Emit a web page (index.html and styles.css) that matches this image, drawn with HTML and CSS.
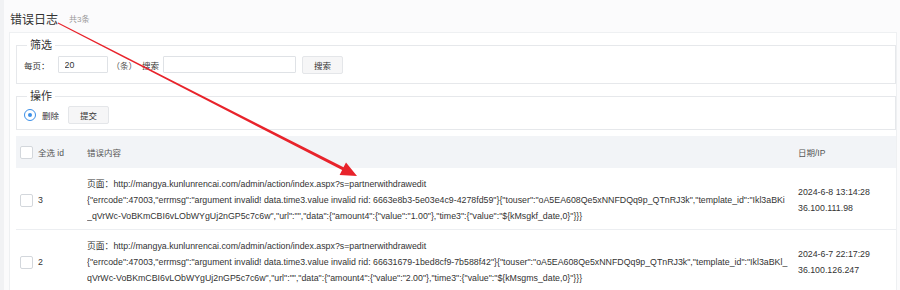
FILE: index.html
```html
<!DOCTYPE html>
<html lang="zh-CN">
<head>
    <meta charset="UTF-8">
    <title>错误日志</title>
    <link rel="stylesheet" href="styles.css">
</head>
<body>

    <div class="main">
        <div class="head">
            <h1>错误日志</h1>
            <span class="count">共3条</span>
        </div>

        <div class="panel">
            <!-- 筛选 -->
            <fieldset class="box filter">
                <legend>筛选</legend>
                <div class="row">
                    <span class="lbl">每页：</span>
                    <input class="ipt ipt-size" type="text" value="20">
                    <span class="unit">（条）</span>
                    <span class="lbl">搜索</span>
                    <input class="ipt ipt-key" type="text">
                    <button class="btn btn-search">搜索</button>
                </div>
            </fieldset>

            <!-- 操作 -->
            <fieldset class="box action">
                <legend>操作</legend>
                <div class="row">
                    <span class="radio"></span>
                    <span class="lbl lbl-del">删除</span>
                    <button class="btn btn-submit">提交</button>
                </div>
            </fieldset>

            <table class="list">
                <colgroup>
                    <col class="c-id">
                    <col>
                    <col class="c-date">
                </colgroup>
                <thead>
                    <tr>
                        <th><div class="cell"><span class="chk"></span>全选 id</div></th>
                        <th>错误内容</th>
                        <th>日期/IP</th>
                    </tr>
                </thead>
                <tbody>
                    <tr>
                        <td><div class="cell"><span class="chk"></span>3</div></td>
                        <td class="msg">页面：http://mangya.kunlunrencai.com/admin/action/index.aspx?s=partnerwithdrawedit<br>{"errcode":47003,"errmsg":"argument invalid! data.time3.value invalid rid: 6663e8b3-5e03e4c9-4278fd59"}{"touser":"oA5EA608Qe5xNNFDQq9p_QTnRJ3k","template_id":"Ikl3aBKi<br>_qVrWc-VoBKmCBI6vLObWYgUj2nGP5c7c6w","url":"","data":{"amount4":{"value":"1.00"},"time3":{"value":"${kMsgkf_date,0}"}}}</td>
                        <td class="date">2024-6-8 13:14:28<br>36.100.111.98</td>
                    </tr>
                    <tr>
                        <td><div class="cell"><span class="chk"></span>2</div></td>
                        <td class="msg">页面：http://mangya.kunlunrencai.com/admin/action/index.aspx?s=partnerwithdrawedit<br>{"errcode":47003,"errmsg":"argument invalid! data.time3.value invalid rid: 66631679-1bed8cf9-7b588f42"}{"touser":"oA5EA608Qe5xNNFDQq9p_QTnRJ3k","template_id":"Ikl3aBKl_<br>qVrWc-VoBKmCBI6vLObWYgUj2nGP5c7c6w","url":"","data":{"amount4":{"value":"2.00"},"time3":{"value":"${kMsgms_date,0}"}}}</td>
                        <td class="date">2024-6-7 22:17:29<br>36.100.126.247</td>
                    </tr>
                </tbody>
            </table>
        </div>
    </div>

    <!-- 标注箭头 -->
    <svg class="arrow" width="900" height="290" viewBox="0 0 900 290">
        <polygon points="58.2,22.6 343.5,167.3 346,162.5 357,176 339.6,174.9 342.1,170.1 57.8,23.4" fill="#e8232b"/>
    </svg>

</body>
</html>
```

FILE: styles.css
```css
body {
    margin: 0;
    background: #f1f2f4;
    font-family: "Liberation Sans", "Noto Sans CJK SC", sans-serif;
    color: #333;
    overflow: hidden;
}
.main {
    margin-left: 4px;
    background: #fbfbfc;
    min-height: 290px;
    padding-top: 4px;
}
.head {
    height: 28px;
    display: flex;
    align-items: center;
    padding-left: 6px;
}
.head h1 {
    margin: 0;
    font-size: 12px;
    font-weight: normal;
    color: #333;
}
.count {
    margin-left: 11px;
    font-size: 8px;
    color: #999;
}
.panel {
    margin: 0 3px 0 5px;
    background: #fff;
    border: 1px solid #eef0f2;
    padding: 3px 0 0 6px;
    min-height: 260px;
}
.box {
    margin: 0;
    border: 1px solid #e6e8eb;
    padding: 2px 7px 10px;
}
.box legend {
    font-size: 11px;
    line-height: 18px;
    padding: 0 3px;
    margin-left: 3px;
    color: #333;
}
.action {
    margin-top: 3px;
    padding: 1px 7px 5px;
}
.row {
    display: flex;
    align-items: center;
    height: 17px;
    font-size: 8.5px;
}
.action .row {
    height: 18px;
}
.ipt {
    box-sizing: border-box;
    height: 17px;
    border: 1px solid #dfe2e6;
    border-radius: 1px;
    padding: 0 6px;
    font-family: inherit;
    font-size: 8.8px;
    color: #333;
    outline: none;
}
.ipt-size {
    width: 50px;
    margin-left: 8px;
}
.unit {
    margin: 0 5px 0 4px;
    color: #555;
}
.ipt-key {
    width: 133px;
    margin-left: 4px;
}
.btn {
    box-sizing: border-box;
    width: 41px;
    height: 18px;
    background: #f6f6f7;
    border: 1px solid #e4e6e9;
    border-radius: 2px;
    font-family: inherit;
    font-size: 8.5px;
    color: #333;
    padding: 0;
}
.btn-search {
    margin-left: 6px;
}
.radio {
    box-sizing: border-box;
    width: 12px;
    height: 12px;
    border: 1px solid #3b8fe8;
    border-radius: 50%;
    position: relative;
    background: #fff;
}
.radio::after {
    content: "";
    position: absolute;
    left: 3px;
    top: 3px;
    width: 4px;
    height: 4px;
    border-radius: 50%;
    background: #3b8fe8;
}
.lbl-del {
    margin: 0 9px 0 6px;
}
.list {
    width: 100%;
    margin-top: 6px;
    border-collapse: collapse;
    table-layout: fixed;
    font-size: 8.8px;
}
.c-id {
    width: 71px;
}
.c-date {
    width: 98px;
}
.list th {
    height: 32px;
    padding: 0;
    background: #f2f4f7;
    text-align: left;
    font-weight: normal;
    font-size: 8.5px;
    color: #555;
}
.list td {
    padding: 8px 0 5px;
    border-bottom: 1px solid #eceef1;
    line-height: 16px;
    vertical-align: middle;
}
.cell {
    display: flex;
    align-items: center;
    padding-left: 4px;
}
.chk {
    box-sizing: border-box;
    width: 13px;
    height: 13px;
    border: 1px solid #d3d7dc;
    border-radius: 2px;
    background: #fff;
    margin-right: 5px;
}
.msg {
    white-space: nowrap;
    overflow: hidden;
}
.date {
    white-space: nowrap;
}
.arrow {
    position: absolute;
    left: 0;
    top: 0;
    pointer-events: none;
}
```
